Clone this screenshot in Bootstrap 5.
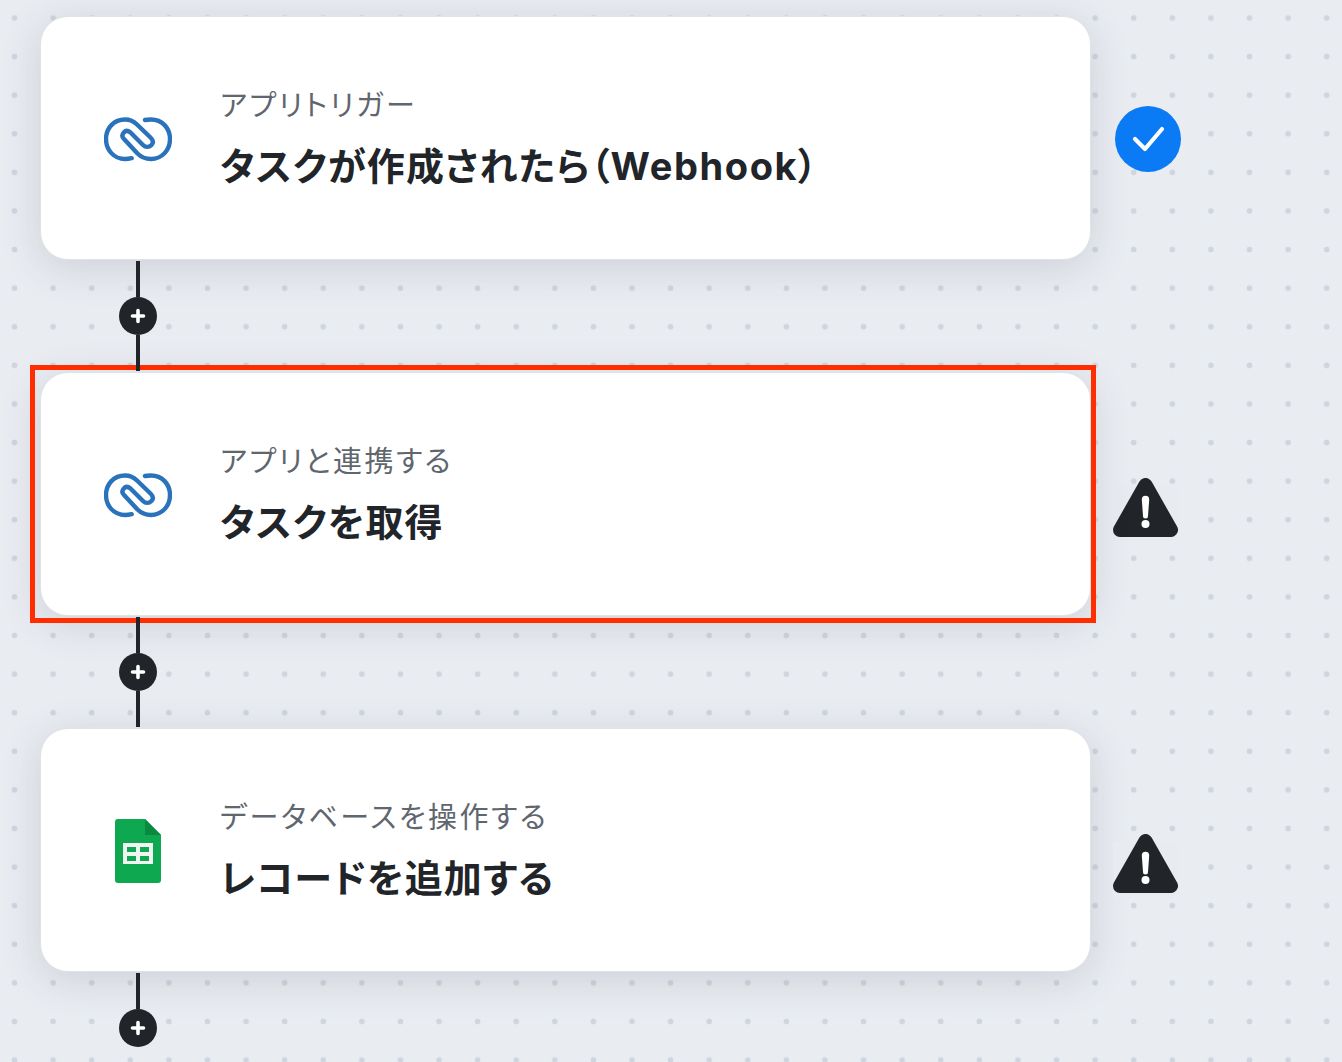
<!DOCTYPE html>
<html lang="ja">
<head>
  <meta charset="UTF-8">
  <title>Flow</title>
  <link href="https://cdn.jsdelivr.net/npm/bootstrap@5.3.0/dist/css/bootstrap.min.css" rel="stylesheet">
  <style>
    html, body { height: 100%; overflow: hidden; }
    body {
      font-family: "Inter", "Noto Sans CJK JP", sans-serif;
      color: #212529;
      background-color: #e9ecf1;
      background-image: radial-gradient(circle at center, #cfd5de 2.6px, transparent 3.2px);
      background-size: 38.6px 38.6px;
      background-position: -4.8px -1.3px;
    }
    .flow-wrap { padding: 16px 0 0 40px; }
    .flow-card {
      width: 1051px;
      height: 244px;
      border-radius: 28px;
      border: 1px solid #dfe2e7;
      background: #fff;
      box-shadow: 0 8px 40px rgba(60, 70, 85, .16);
      padding-left: 63px;
    }
    .flow-icon { width: 68px; flex: none; margin: 2px 48px 0 0; }
    .flow-text { margin-top: 2px; }
    .flow-label { font-size: 29px; line-height: 40px; color: #5f666e; font-feature-settings: "palt"; letter-spacing: 2.5px; }
    .flow-title { font-size: 38px; line-height: 52px; font-weight: 700; margin-top: 14px; font-feature-settings: "palt"; letter-spacing: 1.1px; }
    .flow-latin { letter-spacing: 1.6px; }
    .flow-status { width: 70px; margin-left: 22px; flex: none; }
    .status-ok { width: 66px; height: 66px; margin: 2px 0 0 2px; background: #0a7bf4; }
    .status-warn { margin-top: 31px; }
    .flow-link { width: 38px; height: 112px; margin-left: 79px; position: relative; z-index: 2; }
    .link-line { width: 4px; height: 36px; background: #212529; }
    .link-line:first-child { margin-top: 1px; }
    .link-add { width: 38px; height: 38px; background: #212529; flex: none; }
    .flow-picked {
      position: absolute;
      inset: -8px -6px -8px -11px;
      border: 5px solid #ff2d00;
      pointer-events: none;
    }
  </style>
</head>
<body>
  <div class="flow-wrap">

    <div class="d-flex align-items-center">
      <div class="flow-card d-flex align-items-center">
        <div class="flow-icon d-flex justify-content-center">
          <svg width="68" height="46" viewBox="104 116 68 46" fill="none" stroke="#2a72bb" stroke-width="4.4" stroke-linecap="round" stroke-linejoin="round"><path d="M131.7 158.2C129 158.8 127 159 125 159C114 159 106 150 106 139C106 128 114 119.5 125 119.5C130 119.5 134 121.500 137 124.500L150.500 137.500C153.500 140.500 153.500 143 151.500 145C149 147.500 145.500 147.500 143 145L130.500 132.500C128 130.500 125.500 130.500 123.800 132.500C122 134.500 122 137 124 139L137.500 153.500C141 157 145.500 159 151 159C162 159 170 150 170 139C170 128 162 119.500 151 119.500C149 119.500 147 119.500 145 120"/></svg>
        </div>
        <div class="flow-text">
          <div class="flow-label">アプリトリガー</div>
          <div class="flow-title">タスクが作成されたら（<span class="flow-latin">Webhook</span>）</div>
        </div>
      </div>
      <div class="flow-status">
        <div class="status-ok rounded-circle d-flex align-items-center justify-content-center">
          <svg width="33" height="26" viewBox="0 0 33 26" fill="none" stroke="#fff" stroke-width="4.2" stroke-linecap="round" stroke-linejoin="round"><path d="M3 13L13 23L30 3"/></svg>
        </div>
      </div>
    </div>

    <div class="flow-link d-flex flex-column align-items-center">
      <div class="link-line"></div>
      <div class="link-add rounded-circle d-flex align-items-center justify-content-center">
        <svg width="16" height="16" viewBox="0 0 16 16" stroke="#fff" stroke-width="3.6" stroke-linecap="round"><path d="M8 2.500V13.500M2.500 8H13.500"/></svg>
      </div>
      <div class="link-line"></div>
    </div>

    <div class="d-flex align-items-center">
      <div class="flow-card d-flex align-items-center position-relative">
        <div class="flow-picked"></div>
        <div class="flow-icon d-flex justify-content-center">
          <svg width="68" height="46" viewBox="104 116 68 46" fill="none" stroke="#2a72bb" stroke-width="4.4" stroke-linecap="round" stroke-linejoin="round"><path d="M131.7 158.2C129 158.8 127 159 125 159C114 159 106 150 106 139C106 128 114 119.5 125 119.5C130 119.5 134 121.500 137 124.500L150.500 137.500C153.500 140.500 153.500 143 151.500 145C149 147.500 145.500 147.500 143 145L130.500 132.500C128 130.500 125.500 130.500 123.800 132.500C122 134.500 122 137 124 139L137.500 153.500C141 157 145.500 159 151 159C162 159 170 150 170 139C170 128 162 119.500 151 119.500C149 119.500 147 119.500 145 120"/></svg>
        </div>
        <div class="flow-text">
          <div class="flow-label">アプリと連携する</div>
          <div class="flow-title">タスクを取得</div>
        </div>
      </div>
      <div class="flow-status">
        <svg class="status-warn d-block" width="65" height="63" viewBox="0 0 65 63"><rect y="8" width="65" height="55" fill="#e8ebf0"/><path d="M32.500 7L58 52H7Z" fill="#212529" stroke="#212529" stroke-width="14" stroke-linejoin="round"/><path d="M28.800 21.500a3.700 3.700 0 0 1 7.400 0L35 38a2.500 2.500 0 0 1-5 0Z" fill="#fff"/><circle cx="32.500" cy="46" r="4" fill="#fff"/></svg>
      </div>
    </div>

    <div class="flow-link d-flex flex-column align-items-center">
      <div class="link-line"></div>
      <div class="link-add rounded-circle d-flex align-items-center justify-content-center">
        <svg width="16" height="16" viewBox="0 0 16 16" stroke="#fff" stroke-width="3.6" stroke-linecap="round"><path d="M8 2.500V13.500M2.500 8H13.500"/></svg>
      </div>
      <div class="link-line"></div>
    </div>

    <div class="d-flex align-items-center">
      <div class="flow-card d-flex align-items-center">
        <div class="flow-icon d-flex justify-content-center">
          <svg width="46" height="64" viewBox="0 0 46 64"><path d="M3 0H30L46 16V61a3 3 0 0 1-3 3H3a3 3 0 0 1-3-3V3a3 3 0 0 1 3-3Z" fill="#0da84f"/><path d="M30 0L46 16H30Z" fill="#0a8a3e"/><path d="M8 24H38V45H8ZM12 28V33H21V28ZM25 28V33H34V28ZM12 37V42H21V37ZM25 37V42H34V37Z" fill="#f1f5f2" fill-rule="evenodd"/></svg>
        </div>
        <div class="flow-text">
          <div class="flow-label">データベースを操作する</div>
          <div class="flow-title">レコードを追加する</div>
        </div>
      </div>
      <div class="flow-status">
        <svg class="status-warn d-block" width="65" height="63" viewBox="0 0 65 63"><rect y="8" width="65" height="55" fill="#e8ebf0"/><path d="M32.500 7L58 52H7Z" fill="#212529" stroke="#212529" stroke-width="14" stroke-linejoin="round"/><path d="M28.800 21.500a3.700 3.700 0 0 1 7.400 0L35 38a2.500 2.500 0 0 1-5 0Z" fill="#fff"/><circle cx="32.500" cy="46" r="4" fill="#fff"/></svg>
      </div>
    </div>

    <div class="flow-link d-flex flex-column align-items-center">
      <div class="link-line"></div>
      <div class="link-add rounded-circle d-flex align-items-center justify-content-center">
        <svg width="16" height="16" viewBox="0 0 16 16" stroke="#fff" stroke-width="3.6" stroke-linecap="round"><path d="M8 2.500V13.500M2.500 8H13.500"/></svg>
      </div>
    </div>

  </div>
  <script src="https://cdn.jsdelivr.net/npm/bootstrap@5.3.0/dist/js/bootstrap.bundle.min.js"></script>
</body>
</html>
